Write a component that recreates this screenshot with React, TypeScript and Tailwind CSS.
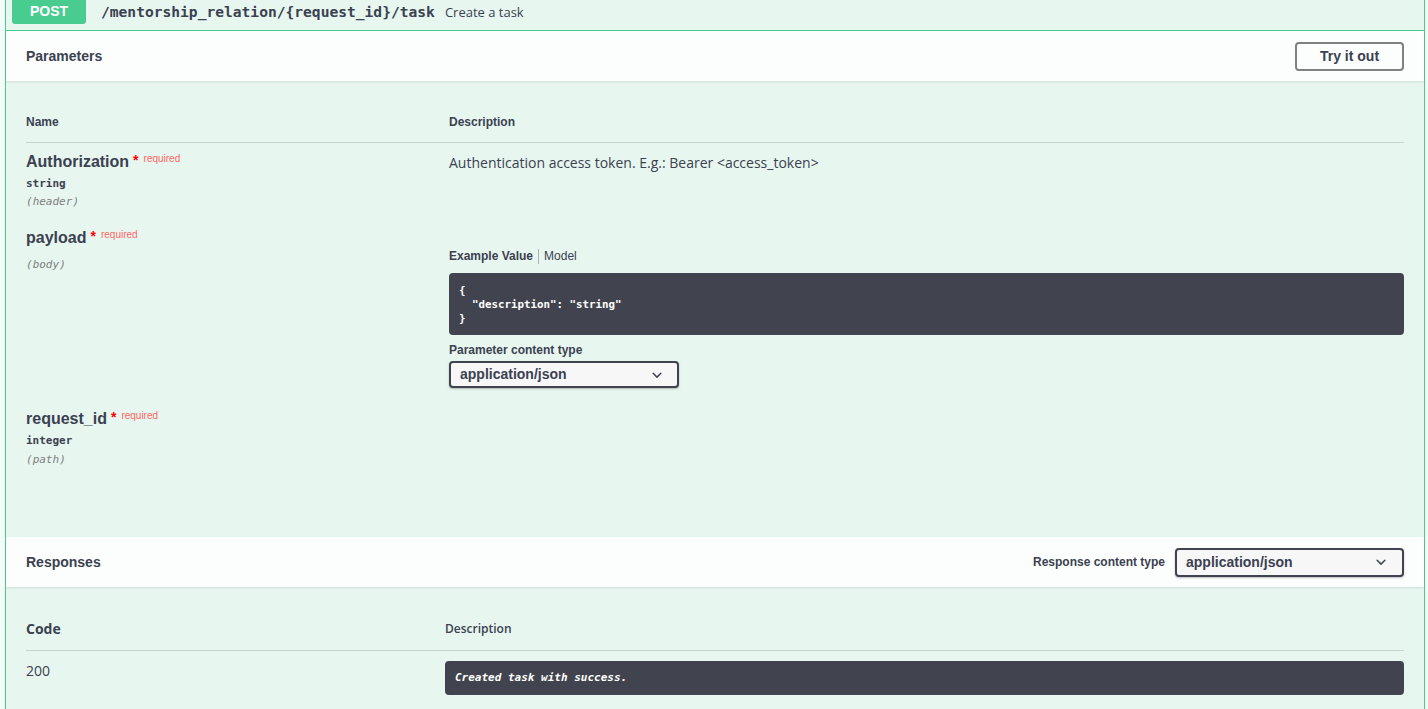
const sans = "font-['Liberation_Sans',Arial,sans-serif]";
const open = "font-['Open_Sans',sans-serif]";
const mono = "font-['DejaVu_Sans_Mono',monospace]";

function Arrow() {
  return (
    <svg width="20" height="20" viewBox="0 0 20 20" className="shrink-0">
      <path
        fill="#3b4151"
        d="M13.418 7.859a.695.695 0 01.978 0 .68.68 0 010 .969l-3.908 3.83a.697.697 0 01-.979 0l-3.908-3.83a.68.68 0 010-.969.695.695 0 01.978 0L10 11l3.418-3.141z"
      />
    </svg>
  );
}

function ContentSelect({ wide }: { wide?: boolean }) {
  return (
    <div
      className={`flex items-center justify-between rounded-[4px] border-2 border-[#41444e] bg-[#f7f7f7] pl-[9px] shadow-[0_1px_2px_0_rgba(0,0,0,0.25)] ${
        wide ? 'h-[29px] w-[229px] pr-[11px]' : 'h-[27px] w-[230px] pr-[10px]'
      }`}
    >
      <span className={`${sans} text-[14px] font-bold text-[#3b4151]`}>application/json</span>
      <Arrow />
    </div>
  );
}

function ParamName({ name }: { name: string }) {
  return (
    <div className={`${sans} flex items-start text-[16px] font-bold leading-[20px] text-[#3b4151]`}>
      <span>{name}</span>
      <span className="ml-[4px] text-[14px] leading-[16px] text-[#ff0000]">*</span>
      <span className="ml-[5px] -mt-[1px] text-[10px] font-normal leading-[16px] text-[#ff6666]">required</span>
    </div>
  );
}

function ParamType({ type }: { type: string }) {
  return <div className={`${mono} text-[11px] font-semibold leading-[16px] text-[#3b4151]`}>{type}</div>;
}

function ParamIn({ where }: { where: string }) {
  return <div className={`${mono} text-[11px] italic leading-[16px] text-[#808080]`}>({where})</div>;
}

function SectionHeader({ children }: { children: React.ReactNode }) {
  return (
    <div className="flex h-[50px] items-center justify-between bg-[#fcfefd] px-[20px] shadow-[0_1px_2px_0_rgba(0,0,0,0.1)]">
      {children}
    </div>
  );
}

export default function App() {
  return (
    <div className="h-[709px] overflow-hidden bg-[#f4fbf8] pl-[5px] pr-[3px]">
      <div className="border-x border-[#49cc90] bg-[#e7f6ef]">
        {/* Summary bar */}
        <div className="flex h-[31px] items-start border-b border-[#49cc90] pl-[6px]">
          <div
            className={`${sans} -mt-[2px] flex h-[26px] w-[74px] items-center justify-center rounded-[3px] bg-[#49cc90] text-[14px] font-bold text-white`}
          >
            POST
          </div>
          <span className={`${mono} ml-[15px] mt-[2px] text-[14.6px] font-bold leading-[20px] text-[#3b4151]`}>
            /mentorship_relation/&#123;request_id&#125;/task
          </span>
          <span className={`${open} ml-[10px] mt-[3px] text-[13px] leading-[18px] text-[#3b4151]`}>Create a task</span>
        </div>

        {/* Parameters */}
        <SectionHeader>
          <span className={`${sans} text-[14px] font-bold text-[#3b4151]`}>Parameters</span>
          <button
            className={`${sans} h-[29px] w-[109px] rounded-[4px] border-2 border-[#808080] text-[14px] font-bold text-[#3b4151]`}
          >
            Try it out
          </button>
        </SectionHeader>

        <div className="px-[20px] pb-[69px] pt-[26px]">
          <div className={`${sans} flex h-[36px] items-start border-b border-[#c4d4cd] pt-[8px] text-[12px] font-bold leading-[15px] text-[#3b4151]`}>
            <span className="w-[423px]">Name</span>
            <span>Description</span>
          </div>

          {/* Authorization */}
          <div className="mt-[9px] flex">
            <div className="w-[423px]">
              <ParamName name="Authorization" />
              <div className="mt-[4px]">
                <ParamType type="string" />
              </div>
              <div className="mt-[2px]">
                <ParamIn where="header" />
              </div>
            </div>
            <div className={`${open} text-[14px] leading-[22px] text-[#3b4151]`}>
              Authentication access token. E.g.: Bearer &lt;access_token&gt;
            </div>
          </div>

          {/* payload */}
          <div className="mt-[18px] flex">
            <div className="w-[423px]">
              <ParamName name="payload" />
              <div className="mt-[9px]">
                <ParamIn where="body" />
              </div>
            </div>
            <div className="flex-1 pt-[21px]">
              <div className={`${sans} flex items-center text-[12px] leading-[15px] text-[#3b4151]`}>
                <span className="font-bold">Example Value</span>
                <span className="mx-[5px] h-[15px] w-px bg-[#b0b0b0]" />
                <span>Model</span>
              </div>
              <div
                className={`${mono} mt-[9px] rounded-[4px] bg-[#41444e] pb-[9px] pl-[10px] pt-[11px] text-[10.8px] font-bold leading-[14px] text-white`}
              >
                <div>&#123;</div>
                <div className="whitespace-pre">  "description": "string"</div>
                <div>&#125;</div>
              </div>
              <div className={`${sans} mt-[8px] text-[12px] font-bold leading-[15px] text-[#3b4151]`}>
                Parameter content type
              </div>
              <div className="mt-[3px]">
                <ContentSelect />
              </div>
            </div>
          </div>

          {/* request_id */}
          <div className="mt-[21px]">
            <ParamName name="request_id" />
            <div className="mt-[4px]">
              <ParamType type="integer" />
            </div>
            <div className="mt-[3px]">
              <ParamIn where="path" />
            </div>
          </div>
        </div>

        {/* Responses */}
        <SectionHeader>
          <span className={`${sans} text-[14px] font-bold text-[#3b4151]`}>Responses</span>
          <div className="flex items-center gap-[10px]">
            <span className={`${sans} text-[12px] font-bold text-[#3b4151]`}>Response content type</span>
            <ContentSelect wide />
          </div>
        </SectionHeader>

        <div className="px-[20px] pb-[40px] pt-[32px]">
          <div className="flex h-[32px] items-start border-b border-[#c4d4cd]">
            <span className={`${open} w-[419px] text-[14px] font-bold leading-[20px] text-[#3b4151]`}>Code</span>
            <span className={`${open} text-[12px] font-semibold leading-[20px] text-[#3b4151]`}>Description</span>
          </div>
          <div className="mt-[10px] flex">
            <span className={`${open} w-[419px] text-[14px] leading-[20px] text-[#3b4151]`}>200</span>
            <div
              className={`${mono} flex h-[34px] flex-1 items-center rounded-[4px] bg-[#41444e] pl-[10px] text-[11px] font-bold italic text-white`}
            >
              Created task with success.
            </div>
          </div>
        </div>
      </div>
    </div>
  );
}
